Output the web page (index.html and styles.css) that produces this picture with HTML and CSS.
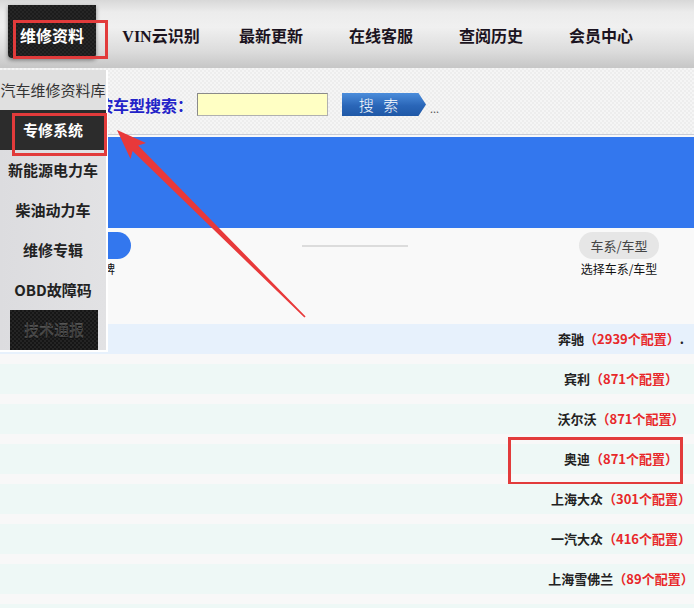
FILE: index.html
```html
<!DOCTYPE html>
<html lang="zh-CN">
<head>
    <meta charset="UTF-8">
    <meta name="viewport" content="width=device-width, initial-scale=1.0">
    <title>汽车维修资料</title>
    <link rel="stylesheet" href="styles.css">
</head>
<body>
    <header class="topnav">
        <a class="topnav-item topnav-item--first"><span class="topnav-tab">维修资料</span></a>
        <a class="topnav-item">VIN云识别</a>
        <a class="topnav-item">最新更新</a>
        <a class="topnav-item">在线客服</a>
        <a class="topnav-item">查阅历史</a>
        <a class="topnav-item">会员中心</a>
    </header>

    <main class="page">
        <div class="search-bar">
            <label class="search-label" for="kw">按车型搜索：</label>
            <input class="search-input" type="text" id="kw">
            <button class="search-btn" type="button">搜 索</button>
            <span class="search-more">...</span>
        </div>

        <div class="banner"></div>

        <div class="steps">
            <div class="step step--first">
                <span class="step-pill step-pill--active"></span>
                <span class="step-label">选择品牌</span>
            </div>
            <span class="step-line"></span>
            <div class="step">
                <span class="step-pill">车系/车型</span>
                <span class="step-label">选择车系/车型</span>
            </div>
        </div>

        <ul class="brand-list">
            <li class="brand brand--active"><span class="brand-cell">奔驰<em>（2939个配置）</em>.</span></li>
            <li class="brand"><span class="brand-cell">宾利<em>（871个配置）</em></span></li>
            <li class="brand"><span class="brand-cell">沃尔沃<em>（871个配置）</em></span></li>
            <li class="brand brand--marked"><span class="brand-cell">奥迪<em>（871个配置）</em></span></li>
            <li class="brand"><span class="brand-cell">上海大众<em>（301个配置）</em></span></li>
            <li class="brand"><span class="brand-cell">一汽大众<em>（416个配置）</em></span></li>
            <li class="brand"><span class="brand-cell">上海雪佛兰<em>（89个配置）</em></span></li>
            <li class="brand"></li>
        </ul>
    </main>

    <!-- dropdown of the first tab -->
    <aside class="menu">
        <a class="menu-item menu-item--plain">汽车维修资料库</a>
        <a class="menu-item menu-item--current">专修系统</a>
        <a class="menu-item">新能源电力车</a>
        <a class="menu-item">柴油动力车</a>
        <a class="menu-item">维修专辑</a>
        <a class="menu-item">OBD故障码</a>
        <a class="menu-item menu-item--dark"><span>技术通报</span></a>
    </aside>

    <!-- annotation arrow -->
    <svg class="pointer" width="694" height="608" viewBox="0 0 694 608">
        <polygon points="117,130 146,143 138.2,145.5 305.6,316.4 304.4,317.6 132.6,151.1 130.5,159" fill="#e8393a"/>
    </svg>
</body>
</html>
```

FILE: styles.css
```css
/* Reset */
* {
    margin: 0;
    padding: 0;
    box-sizing: border-box;
}

body {
    position: relative;
    width: 694px;
    height: 608px;
    overflow: hidden;
    font-family: "Noto Sans CJK SC", sans-serif;
    background: #f8f8f8;
    color: #222;
}

a {
    text-decoration: none;
    color: inherit;
}

/* Top navigation */
.topnav {
    display: flex;
    height: 68px;
    background: linear-gradient(#d8d8d8 0, #ececec 18%, #f0f0f0 40%, #dcdcdc 75%, #c6c6c6 100%);
    font-family: "Liberation Serif", "Noto Sans CJK SC", serif;
    font-size: 16px;
    font-weight: bold;
    line-height: 16px;
    color: #1b1320;
}

.topnav-item {
    width: 110px;
    padding-top: 29px;
    text-align: center;
}

.topnav-item--first {
    width: 106px;
    padding-top: 5px;
}

.topnav-tab {
    position: relative;
    display: block;
    width: 88px;
    height: 53px;
    margin-left: 8px;
    padding-top: 24px;
    background: repeating-conic-gradient(#1c1c1c 0 25%, #262626 0 50%) 0 0 / 4px 4px;
    border-radius: 0 0 4px 4px;
    box-shadow: 0 2px 4px rgba(0, 0, 0, 0.45);
    color: #fff;
}

/* red annotation box */
.topnav-tab::after {
    content: "";
    position: absolute;
    left: 5px;
    top: 15px;
    width: 89px;
    height: 33px;
    border: 3px solid #e23b3b;
}

/* Search row */
.search-bar {
    display: flex;
    align-items: center;
    height: 67px;
    padding: 7px 0 0 97px;
    background: repeating-conic-gradient(#ededed 0 25%, #f5f5f5 0 50%) 0 0 / 4px 4px;
    border-bottom: 1px solid #c9ccd6;
}

.search-label {
    flex-shrink: 0;
    width: 96px;
    font-size: 16px;
    font-weight: bold;
    line-height: 16px;
    white-space: nowrap;
    color: #2323c8;
}

.search-input {
    flex-shrink: 0;
    width: 131px;
    height: 23px;
    margin-left: 4px;
    background: #ffffc4;
    border: 1px solid #b0b0b0;
    border-top-color: #8a8a8a;
    border-left-color: #8a8a8a;
}

.search-btn {
    flex-shrink: 0;
    width: 84px;
    height: 23px;
    margin-left: 14px;
    padding-right: 8px;
    border: none;
    background: linear-gradient(#4b8ddb, #2a66b8 55%, #1f58a6);
    clip-path: polygon(0 0, 91% 0, 100% 50%, 91% 100%, 0 100%);
    font-family: "Noto Sans CJK SC", sans-serif;
    font-size: 15px;
    font-weight: 300;
    letter-spacing: 3px;
    line-height: 23px;
    color: #fff;
}

.search-more {
    margin: 6px 0 0 4px;
    font-size: 11px;
    color: #555;
}

/* Blue banner */
.banner {
    height: 91px;
    margin-top: 2px;
    background: #3377ee;
}

/* Steps */
.steps {
    display: flex;
    align-items: flex-start;
    height: 96px;
    padding-top: 4px;
    background: #f9f9f9;
}

.step {
    display: flex;
    flex-direction: column;
    align-items: center;
    width: 80px;
    margin-left: 171px;
}

.step--first {
    margin-left: 51px;
}

.step-pill {
    width: 80px;
    height: 27px;
    border-radius: 14px;
    background: #e6e6e6;
    font-size: 13px;
    line-height: 27px;
    text-align: center;
    color: #444;
}

.step-pill--active {
    background: #3377ee;
}

.step-label {
    margin-top: 3px;
    white-space: nowrap;
    font-size: 12px;
    line-height: 14px;
    color: #111;
}

.step-line {
    width: 106px;
    height: 2px;
    margin: 13px 0 0 171px;
    background: #dcdcdc;
}

/* Brand list */
.brand-list {
    list-style: none;
    background: #f8f8f8;
}

.brand {
    position: relative;
    display: flex;
    height: 30px;
    margin-bottom: 10px;
    background: #eef8f6;
}

.brand--active {
    background: #e7f1fc;
}

.brand-cell {
    width: 146px;
    margin-left: auto;
    text-align: center;
    white-space: nowrap;
    font-size: 13px;
    font-weight: bold;
    line-height: 30px;
    color: #222;
}

.brand-cell em {
    font-style: normal;
    color: #e8282a;
}

/* red annotation box */
.brand--marked::after {
    content: "";
    position: absolute;
    top: -7px;
    right: 11px;
    width: 169px;
    height: 42px;
    border: 3px solid #e23b3b;
}

/* Dropdown menu */
.menu {
    position: absolute;
    top: 70px;
    left: 0;
    width: 108px;
    height: 282px;
    background: linear-gradient(90deg, #dcdcdf, #e2e2e4);
    border-right: 2px solid #fff;
    border-bottom: 2px solid #fff;
    font-size: 15px;
    font-weight: bold;
    color: #222;
}

.menu-item {
    position: relative;
    display: block;
    height: 40px;
    line-height: 40px;
    text-align: center;
    white-space: nowrap;
}

.menu-item--plain {
    font-weight: normal;
    color: #333;
    background: #e0e0e0;
}

.menu-item--current {
    background: #2c2c2c;
    color: #fff;
}

/* red annotation box */
.menu-item--current::after {
    content: "";
    position: absolute;
    left: 12px;
    top: 3px;
    width: 89px;
    height: 37px;
    border: 3px solid #e23b3b;
}

.menu-item--dark span {
    display: block;
    width: 88px;
    height: 40px;
    margin-left: 10px;
    background: repeating-conic-gradient(#161616 0 25%, #242424 0 50%) 0 0 / 4px 4px;
    font-weight: normal;
    color: #454545;
    text-shadow: 0 1px 0 #111, 0 -1px 0 #555;
}

.pointer {
    position: absolute;
    top: 0;
    left: 0;
    pointer-events: none;
}
```
